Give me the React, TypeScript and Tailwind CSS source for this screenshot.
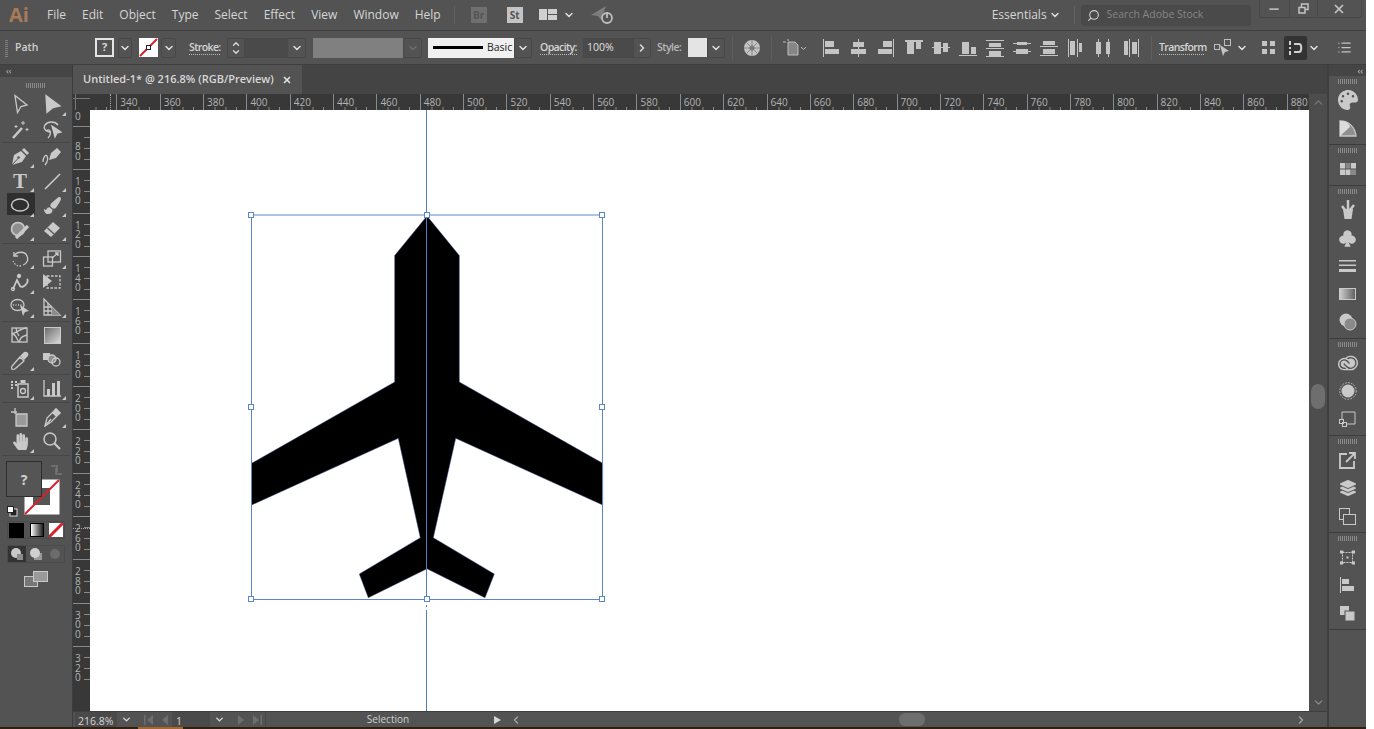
import type { ReactNode } from 'react';
import { ChevronDown, ChevronUp, ChevronLeft, ChevronRight, Search, Minus, X, List } from 'lucide-react';
import { FaPaintBrush, FaHandPaper, FaLayerGroup, FaPalette } from 'react-icons/fa';
import { BsSuitClubFill } from 'react-icons/bs';
import { SiAdobecreativecloud } from 'react-icons/si';

const ui = { fontFamily: '"Open Sans", "Noto Sans", sans-serif' };
const G = '#c9c9c9';

function Ic({ children, size = 20, box = 20 }: { children: ReactNode; size?: number; box?: number }) {
  return (
    <svg width={size} height={size} viewBox={`0 0 ${box} ${box}`} fill="none" stroke={G} strokeWidth={1.3}>
      {children}
    </svg>
  );
}

const tools: { el: ReactNode; flag?: boolean }[][] = [
  [
    { el: <Ic><path d="M5 1.500 17 11l-6 1.500-3.500 6z" /></Ic> },
    { el: <Ic><path d="M4 1.500 18 12l-7 1.500-6 5z" fill={G} /></Ic>, flag: true },
    { el: <Ic><path d="M3 19 12 9" strokeWidth={2.6} /><path d="M13 2v4M11 4h4M6 6v3M4.500 7.500h3M17 9v3M15.500 10.500h3" strokeWidth={1} /></Ic> },
    { el: <Ic><path d="M9 13C3 13 1 9 3 6c3-4 10-4 13 0" /><path d="M6 19c2-2 3-4 2-7-1-2-3-1-3 0" /><path d="M10 7l9 6-4 1-2 4z" fill={G} /></Ic> },
  ],
  [
    { el: <Ic><path d="M2 19 4 9l7-4 5 5-4 6z" fill={G} stroke="none" /><path d="M2 19 8 12.500" stroke="#535353" strokeWidth={1} /><circle cx="8.500" cy="11.500" r="1.300" fill="#535353" stroke="none" /><path d="M12 4l2-2 5 5-2 2z" fill={G} stroke="none" /></Ic>, flag: true },
    { el: <Ic><path d="M1 16c0-5 3-8 4-6 2 4-2 9-2 9" /><path d="M7 14 9 7l6-5 4 4-5 6z" fill={G} stroke="none" /></Ic> },
    { el: <span className="mt-[2px] text-[21px] leading-none font-bold text-[#c9c9c9]" style={{ fontFamily: '"Liberation Serif", serif' }}>T</span>, flag: true },
    { el: <Ic><path d="M3 18 18 3" strokeWidth={1.6} /></Ic>, flag: true },
    { el: <Ic><ellipse cx="10" cy="10" rx="8.500" ry="6" strokeWidth={1.5} /></Ic>, flag: true },
    { el: <FaPaintBrush size={17} color={G} />, flag: true },
    { el: <Ic><circle cx="8" cy="9" r="6.500" fill="#8f8f8f" strokeWidth={1.6} /><path d="M6 18 18 6" strokeWidth={3.2} /></Ic>, flag: true },
    { el: <Ic><path d="M2 11 11 2l7 6-9 9z" fill={G} stroke="none" /><path d="M5.500 8l6.500 6" stroke="#535353" strokeWidth={1.2} /></Ic>, flag: true },
  ],
  [
    { el: <Ic><path d="M4 4v4h4" /><path d="M4 8c3-5 11-5 13 0s-1 8-4 9" /><path d="M11 18H8l-3-2-2-3" strokeDasharray="1.500 1.500" /></Ic>, flag: true },
    { el: <Ic><rect x="1.500" y="9" width="9" height="9" /><rect x="6" y="3" width="12.500" height="11" /><path d="M10 10l6-5M13 5h3v3" /></Ic>, flag: true },
    { el: <Ic><path d="M3 17 7 8l3 6c2 2 5 0 7-3 1-2 1-3 0-4" strokeWidth={1.8} /><circle cx="3" cy="17" r="1.500" /><circle cx="9" cy="4" r="1.500" fill={G} /></Ic>, flag: true },
    { el: <Ic><rect x="5" y="4" width="13" height="12" strokeDasharray="2.500 1.500" /><path d="M1 2l9 7-9 7z" fill={G} stroke="none" /></Ic> },
    { el: <Ic><ellipse cx="7.500" cy="8" rx="6.500" ry="5.500" /><path d="M3 8h9" strokeDasharray="1 1.500" /><path d="M10 8l9 6-4 1-2 4z" fill={G} stroke="none" /></Ic>, flag: true },
    { el: <Ic><path d="M2 2v16h16L2 2z" /><path d="M2 10h8M2 14h12M6 6v12M10 10v8" /><path d="M10 10l8 8h-8z" fill="#8c8c8c" stroke="none" /></Ic>, flag: true },
  ],
  [
    { el: <Ic><rect x="2" y="3" width="15" height="14" /><path d="M2 9c5 0 5 8 7.500 8M2 9c5-2 10-6 15-6M9.500 17c0-4 3-6 7.500-7M6 3c0 3 1 5 3 8" /></Ic> },
    { el: <svg width="17" height="17" viewBox="0 0 17 17"><defs><linearGradient id="toolgrad" x1="0" x2="1" y1="0" y2="1"><stop offset="0" stopColor="#6a6a6a" /><stop offset="1" stopColor="#dcdcdc" /></linearGradient></defs><rect x="0.500" y="0.500" width="16" height="16" fill="url(#toolgrad)" stroke={G} /></svg> },
    { el: <Ic><path d="M2 19c-1-1 0-3 1-4l7-8 4 4-8 7c-1 1-3 2-4 1z" /><path d="M11 6l3-3c2-2 5 1 3 3l-3 3z" fill={G} /></Ic>, flag: true },
    { el: <Ic><rect x="1" y="3" width="7" height="7" fill={G} stroke="none" /><circle cx="10" cy="9" r="4" fill="#8f8f8f" /><circle cx="14" cy="12" r="4" /></Ic> },
  ],
  [
    { el: <Ic><path d="M1 4h2M5 4h2M1 7h2M5 7h2M1 10h2" strokeWidth={1.8} /><rect x="8" y="6" width="10" height="13" strokeWidth={1.5} /><circle cx="13" cy="13" r="2.500" /><rect x="10.500" y="2" width="5" height="3" fill={G} stroke="none" /></Ic>, flag: true },
    { el: <Ic><path d="M2 2v16h17" /><rect x="5" y="11" width="3" height="7" fill={G} stroke="none" /><rect x="10" y="5" width="3" height="13" fill={G} stroke="none" /><rect x="15" y="3" width="3" height="15" fill={G} stroke="none" /></Ic>, flag: true },
  ],
  [
    { el: <Ic><path d="M1 5h6M5 1v6" /><path d="M6 7h11v12H6z" fill="#9a9a9a" /></Ic> },
    { el: <Ic><path d="M3 19l2-8 9-9 4 4-9 9z" /><path d="M3 19l6-7" /><path d="M14 2l4 4-4 3-3-3z" fill={G} /></Ic>, flag: true },
    { el: <FaHandPaper size={17} color={G} />, flag: true },
    { el: <Ic><circle cx="8" cy="8" r="6" strokeWidth={1.5} /><path d="M12.500 12.500 18 18" strokeWidth={2.200} /></Ic> },
  ],
];

function ToolGrid({ items, tight = false }: { items: { el: ReactNode; flag?: boolean }[]; tight?: boolean }) {
  return (
    <div className={`mx-[2px] grid grid-cols-2 justify-items-center border-b border-[#474747] px-[2px] ${tight ? 'py-[1px]' : 'py-[1.500px]'}`}>
      {items.map((t, i) => (
        <div key={i} className="relative flex h-[24.500px] w-[30px] items-center justify-center">
          {t.el}
          {t.flag && <span className="absolute bottom-[1px] right-[1px] h-0 w-0 border-b-[4px] border-l-[4px] border-b-[#c9c9c9] border-l-transparent" />}
        </div>
      ))}
    </div>
  );
}

function Grip() {
  return <div className="mx-auto h-[5px] w-[20px] bg-[repeating-linear-gradient(90deg,#8a8a8a_0,#8a8a8a_1px,transparent_1px,transparent_2px)]" />;
}

function LeftPanel() {
  return (
    <div className="flex w-[73px] shrink-0 flex-col border-r border-[#3c3c3c] bg-[#535353]">
      <div className="h-[12px] bg-[#454545] pl-[6px] text-[9px] leading-[11px] text-[#bdbdbd]">‹‹</div>
      <div className="flex h-[11px] items-end"><Grip /></div>
      <div className="pt-[3px]">
        <ToolGrid items={tools[0]} tight />
        <div className="relative">
          <span className="absolute left-[7px] top-[50px] h-[22px] w-[28px] bg-[#2f2f2f]" />
          <div className="relative"><ToolGrid items={tools[1]} tight /></div>
        </div>
        <ToolGrid items={tools[2]} />
        <ToolGrid items={tools[3]} />
        <ToolGrid items={tools[4]} />
        <ToolGrid items={tools[5]} />
      </div>
      {/* fill and stroke */}
      <div className="relative mt-[4px] h-[58px] shrink-0">
        <svg width="73" height="60" viewBox="0 0 73 60" className="absolute left-0 top-0">
          <path d="M51 6h6v6M62 14h-6V8" stroke="#777" strokeWidth="1.500" fill="none" />
          <rect x="24.500" y="19.500" width="35" height="35" fill="#fff" />
          <rect x="33" y="28" width="17" height="17" fill="#555" />
          <path d="M25 54 59 20" stroke="#d8202a" strokeWidth="2" />
          <rect x="6.500" y="1.500" width="35" height="35" fill="#555" stroke="#2e2e2e" />
          <rect x="10" y="49" width="7" height="7" fill="#222" stroke="#ddd" />
          <rect x="7.500" y="46.500" width="6" height="6" fill="#fff" stroke="#222" />
        </svg>
        <span className="absolute left-[6px] top-[2px] flex h-[35px] w-[36px] items-center justify-center text-[14px] font-bold text-[#d2d2d2]">?</span>
      </div>
      <div className="mt-[3px] ml-[7px] flex h-[18px] w-[58px] items-center justify-between border border-[#4a4a4a] px-[1px]">
        <span className="h-[15px] w-[15px] bg-black" />
        <span className="h-[14px] w-[14px] border border-black bg-gradient-to-r from-white to-[#222]" />
        <svg width="14" height="14" viewBox="0 0 14 14"><rect width="14" height="14" fill="#fff" /><path d="M0 14 14 0" stroke="#d8202a" strokeWidth="3" /></svg>
      </div>
      <div className="mt-[6px] ml-[7px] flex h-[18px] w-[58px] items-center border border-[#4a4a4a]">
        <span className="flex h-full w-[18px] items-center justify-center bg-[#333]"><svg width="14" height="14" viewBox="0 0 14 14"><circle cx="6" cy="6" r="5" fill="#c9c9c9" /><rect x="7" y="7" width="6" height="6" fill="#8c8c8c" /></svg></span>
        <span className="flex h-full w-[19px] items-center justify-center"><svg width="14" height="14" viewBox="0 0 14 14"><rect x="5" y="6" width="8" height="7" fill="#9a9a9a" /><circle cx="6" cy="6" r="5" fill="#d0d0d0" /></svg></span>
        <span className="flex h-full w-[19px] items-center justify-center"><svg width="12" height="12" viewBox="0 0 12 12"><circle cx="6" cy="6" r="5" fill="#6c6c6c" /></svg></span>
      </div>
      <div className="mt-[8px] flex justify-center">
        <svg width="24" height="16" viewBox="0 0 24 16"><rect x="0.500" y="5.500" width="13" height="10" fill="#777" stroke="#c9c9c9" /><rect x="9.500" y="0.500" width="14" height="10" fill="#9a9a9a" stroke="#c9c9c9" /></svg>
      </div>
    </div>
  );
}

const SEL = 'flex h-[20px] items-center justify-center rounded-[2px] border border-[#484848] bg-[#535353]';

function Chev({ w = 18, dim = false }: { w?: number; dim?: boolean }) {
  return (
    <span className={SEL} style={{ width: w }}>
      <ChevronDown size={12} strokeWidth={3} color={dim ? '#6e6e6e' : '#dedede'} />
    </span>
  );
}

function Lbl({ children, className = '' }: { children: ReactNode; className?: string }) {
  return <span className={`border-b border-dotted border-[#bbb] text-[10.500px] leading-[13px] font-semibold tracking-[-0.600px] text-[#d5d5d5] ${className}`}>{children}</span>;
}

const aligns: { bars: number[][] }[] = [
  { bars: [[0, 0, 1, 18], [2, 2, 9, 6], [2, 10, 14, 5]] },
  { bars: [[8, 0, 1, 18], [3, 3, 11, 5], [1, 10, 15, 5]] },
  { bars: [[16, 0, 1, 18], [6, 2, 9, 6], [1, 10, 14, 5]] },
  { bars: [[0, 1, 18, 2], [2, 3, 7, 12], [11, 3, 5, 7]] },
  { bars: [[0, 8, 18, 1], [2, 3, 7, 12], [11, 4, 5, 9]] },
  { bars: [[0, 16, 18, 1], [3, 3, 7, 12], [12, 8, 5, 7]] },
  { bars: [[0, 1, 18, 1], [3, 4, 12, 4], [0, 9, 18, 1], [3, 12, 12, 5], [0, 17, 18, 1]] },
  { bars: [[4, 3, 10, 3], [0, 4, 18, 1], [3, 10, 12, 5], [0, 12, 18, 1]] },
  { bars: [[3, 2, 12, 4], [0, 7, 18, 1], [3, 10, 12, 5], [0, 16, 18, 1]] },
  { bars: [[0, 0, 1, 18], [2, 2, 5, 14], [9, 0, 1, 18], [11, 4, 3, 9]] },
  { bars: [[1, 3, 5, 12], [3, 0, 1, 18], [11, 3, 4, 12], [13, 0, 1, 18]] },
  { bars: [[2, 2, 4, 14], [7, 0, 1, 18], [10, 3, 5, 12], [16, 0, 1, 18]] },
];

function AlignIcon({ bars }: { bars: number[][] }) {
  return (
    <svg width="18" height="18" viewBox="0 0 18 18" fill="#c4c4c4" className="shrink-0">
      {bars.map((b, i) => <rect key={i} x={b[0]} y={b[1]} width={b[2]} height={b[3]} />)}
    </svg>
  );
}

function MenuBar() {
  return (
    <div className="flex h-[31px] shrink-0 items-center border-b border-[#3e3e3e] [&>*]:shrink-0" style={ui}>
      <span className="ml-[9px] w-[38px] text-[20px] font-bold leading-none text-[#a87a58]">Ai</span>
      <div className="flex gap-[16px] text-[12px] text-[#d6d6d6]">
        {['File', 'Edit', 'Object', 'Type', 'Select', 'Effect', 'View', 'Window', 'Help'].map((m) => <span key={m}>{m}</span>)}
      </div>
      <span className="ml-[13px] h-[18px] w-px bg-[#616161]" />
      <span className="ml-[16px] flex h-[16px] w-[16px] items-center justify-center bg-[#6f6f6f] text-[10px] font-bold text-[#555]">Br</span>
      <span className="ml-[20px] flex h-[16px] w-[16px] items-center justify-center bg-[#c4c4c4] text-[10px] font-bold text-[#555]">St</span>
      <svg width="18" height="12" viewBox="0 0 18 12" className="ml-[16px]" fill="#d0d0d0"><rect width="8" height="11" /><rect x="9" width="9" height="5" /><rect x="9" y="6" width="9" height="5" /></svg>
      <ChevronDown size={12} strokeWidth={3} color="#dedede" className="ml-[6px]" />
      <svg width="24" height="20" viewBox="0 0 24 20" className="ml-[15px]">
        <path d="M1 10 16 1l-5 14-3-4z" fill="#7d7d7d" />
        <circle cx="17" cy="13" r="5" fill="none" stroke="#bdbdbd" strokeWidth="1.800" />
        <path d="M17 7v6" stroke="#bdbdbd" strokeWidth="1.800" />
      </svg>
      <span className="ml-[378px] text-[12px] text-[#d6d6d6]">Essentials</span>
      <ChevronDown size={12} strokeWidth={3} color="#dedede" className="ml-[2px]" />
      <span className="ml-[13px] h-[18px] w-px bg-[#616161]" />
      <div className="ml-[6px] flex h-[21px] w-[170px] items-center rounded-[3px] border border-[#484848] bg-[#4a4a4a] pl-[5px] text-[10.500px] text-[#868686]">
        <Search size={13} color="#cfcfcf" className="-scale-x-100" />
        <span className="ml-[7px]">Search Adobe Stock</span>
      </div>
      <div className="mb-[12px] ml-[8px] flex h-[18px] w-[103px] items-center rounded-b-[3px] border border-t-0 border-[#484848]">
        <span className="flex h-full w-[30px] items-center justify-center border-r border-[#484848]"><Minus size={14} strokeWidth={3} color="#b4b4b4" /></span>
        <span className="flex h-full w-[28px] items-center justify-center border-r border-[#484848]">
          <svg width="11" height="11" viewBox="0 0 11 11" fill="none" stroke="#c4c4c4" strokeWidth="1.500"><rect x="3.500" y="1" width="6.500" height="5.500" /><rect x="1" y="4.500" width="6" height="5.500" fill="#535353" /></svg>
        </span>
        <span className="flex flex-1 items-center justify-center"><X size={14} strokeWidth={3} color="#c4c4c4" /></span>
      </div>
    </div>
  );
}

function ControlBar() {
  return (
    <div className="flex h-[34px] shrink-0 items-center border-b border-[#3e3e3e] [&>*]:shrink-0" style={ui}>
      <span className="ml-[5px] h-[18px] w-[3px] bg-[repeating-linear-gradient(0deg,#808080_0,#808080_1px,transparent_1px,transparent_2px)]" />
      <span className="ml-[7px] w-[80px] text-[10.500px] font-semibold text-[#cfcfcf]">Path</span>
      <span className="flex h-[19px] w-[19px] items-center justify-center border-2 border-[#e4e4e4] bg-[#535353] text-[11px] font-bold text-[#d8d8d8]">?</span>
      <span className="ml-[4px]"><Chev w={14} /></span>
      <svg width="19" height="19" viewBox="0 0 19 19" className="ml-[7px]">
        <rect width="19" height="19" fill="#fff" />
        <path d="M1 18 18 1" stroke="#d8202a" strokeWidth="2" />
        <rect x="7.500" y="7.500" width="4" height="4" fill="#fff" stroke="#222" />
      </svg>
      <span className="ml-[3px]"><Chev w={15} /></span>
      <Lbl className="ml-[13px] w-[31px]">Stroke:</Lbl>
      <div className="ml-[7px] flex h-[20px] w-[79px] items-center rounded-[2px] border border-[#484848]">
        <span className="flex h-full w-[17px] flex-col items-center justify-center border-r border-[#484848]">
          <ChevronUp size={10} strokeWidth={3} color="#dedede" className="-mb-[2px]" />
          <ChevronDown size={10} strokeWidth={3} color="#dedede" />
        </span>
        <span className="h-full flex-1 bg-[#4a4a4a]" />
        <span className="flex h-full w-[17px] items-center justify-center"><ChevronDown size={12} strokeWidth={3} color="#dedede" /></span>
      </div>
      <span className="ml-[7px] h-[20px] w-[90px] bg-[#808080]" />
      <Chev w={19} dim />
      <div className="ml-[6px] flex h-[20px] w-[86px] items-center bg-[#f0f0f0] pl-[5px]">
        <span className="h-[3px] w-[50px] bg-black" />
        <span className="ml-[4px] text-[10.500px] text-[#222]">Basic</span>
      </div>
      <Chev w={18} />
      <Lbl className="ml-[8px] w-[37px]">Opacity:</Lbl>
      <div className="ml-[6px] flex h-[20px] w-[68px] items-center rounded-[2px] border border-[#484848] bg-[#4a4a4a] text-[10.500px] text-[#e0e0e0]">
        <span className="w-[50px] pl-[3px]">100%</span>
        <span className="flex h-full flex-1 items-center justify-center bg-[#535353]"><ChevronRight size={12} strokeWidth={3} color="#dedede" /></span>
      </div>
      <span className="ml-[6px] w-[25px] text-[10.500px] font-semibold tracking-[-0.500px] text-[#b9b9b9]">Style:</span>
      <span className="ml-[6px] h-[19px] w-[19px] bg-[#e4e4e4]" />
      <Chev w={18} />
      <span className="ml-[7px] h-[24px] w-px bg-[#5f5f5f]" />
      <svg width="16" height="16" viewBox="0 0 16 16" className="ml-[11px]">
        <circle cx="8" cy="8" r="8" fill="#c4c4c4" />
        <circle cx="8" cy="8" r="2.500" fill="#777" />
        <path d="M8 0v16M0 8h16M2.500 2.500l11 11M13.500 2.500l-11 11" stroke="#777" strokeWidth="0.800" />
      </svg>
      <span className="ml-[11px] h-[24px] w-px bg-[#5f5f5f]" />
      <svg width="24" height="18" viewBox="0 0 24 18" className="ml-[11px]" fill="none" stroke="#bdbdbd">
        <path d="M0 3h3M5 0v2" />
        <path d="M5 3h7l3 3v10H5z" fill="#868686" />
        <path d="M18 8l2.500 2.500L23 8" />
      </svg>
      <div className="ml-[16px] flex w-[317px] items-center justify-between">
        {aligns.map((a, i) => <AlignIcon key={i} bars={a.bars} />)}
      </div>
      <span className="ml-[11px] h-[24px] w-px bg-[#5f5f5f]" />
      <Lbl className="ml-[7px] w-[45px]">Transform</Lbl>
      <svg width="18" height="18" viewBox="0 0 18 18" className="ml-[10px]" fill="none" stroke="#bdbdbd">
        <rect x="0.500" y="5.500" width="5" height="5" />
        <rect x="10.500" y="0.500" width="6" height="6" />
        <path d="M6 6l9 6-4 1-2 4z" fill="#c4c4c4" stroke="none" />
      </svg>
      <ChevronDown size={12} strokeWidth={3} color="#dedede" className="ml-[4px]" />
      <svg width="13" height="13" viewBox="0 0 13 13" fill="#c4c4c4" className="ml-[14px]"><rect width="5" height="5" /><rect x="8" width="5" height="5" /><rect y="8" width="5" height="5" /><rect x="8" y="8" width="5" height="5" /></svg>
      <span className="ml-[9px] flex h-[24px] w-[23px] items-center justify-center rounded-[2px] bg-[#333]">
        <svg width="15" height="14" viewBox="0 0 15 14" fill="none" stroke="#d0d0d0" strokeWidth="2"><path d="M2 0v4M2 6v2M2 10v4" /><path d="M6 3h5c3 0 3 8 0 8H6" /></svg>
      </span>
      <ChevronDown size={12} strokeWidth={3} color="#dedede" className="ml-[1px]" />
      <List size={15} color="#c4c4c4" className="ml-[17px]" />
    </div>
  );
}

const topLabels = Array.from({ length: 29 }, (_, i) => 320 + i * 20);
const sideLabels = ['80', '100', '120', '140', '160', '180', '200', '220', '240', '260', '280', '300', '320'];

function TopRuler() {
  return (
    <div className="relative flex h-[16px] shrink-0 bg-[#383838]" style={ui}>
      <div className="w-[17px] shrink-0">
        <svg width="17" height="16" viewBox="0 0 17 16"><path d="M2.500 0v16M0 4.500h17" stroke="#777" fill="none" /></svg>
      </div>
      <div className="flex min-w-0 flex-1 overflow-hidden">
        <div className="-ml-[17px] flex shrink-0">
          {topLabels.map((n) => (
            <div key={n} className="relative h-[16px] w-[43.350px] shrink-0 border-l border-[#8a8a8a] pl-[3px] text-[10px] leading-[16px] text-[#b4b4b4]">
              {n > 320 && n}
              <svg width="43" height="16" viewBox="0 0 43 16" className="absolute left-0 top-0">
                <path d="M22 13v3M32.500 13v3M11 13v3" stroke="#8a8a8a" />
              </svg>
            </div>
          ))}
        </div>
      </div>
      <div className="flex w-[18px] shrink-0 items-center justify-center bg-[#4d4d4d]"><ChevronUp size={13} strokeWidth={2.500} color="#777" /></div>
      {/* pointer position mark */}
      <span className="absolute left-[37px] top-0 h-full border-l border-dotted border-[#aaa]" />
    </div>
  );
}

function SideRuler() {
  return (
    <div className="relative flex w-[17px] shrink-0 flex-col overflow-hidden bg-[#383838] text-[10px] leading-[9.500px] text-[#b4b4b4]" style={ui}>
      <div className="h-[16px] shrink-0 pl-[2px] pt-[2px]">0</div>
      {sideLabels.map((n) => (
        <div key={n} className={`relative h-[43.350px] shrink-0 border-t border-[#8a8a8a] pl-[2px] ${n.length === 2 ? 'pt-[15px]' : 'pt-[7px]'}`}>
          {n.split('').map((c, i) => <div key={i}>{c}</div>)}
          <svg width="17" height="43" viewBox="0 0 17 43" className="absolute left-0 top-0">
            <path d="M11 10.500h6M11 21.500h6M11 32.500h6" stroke="#8a8a8a" />
          </svg>
        </div>
      ))}
      <span className="absolute left-0 top-[418px] w-full border-t border-dotted border-[#aaa]" />
    </div>
  );
}

function Artboard() {
  const handles = [[251, 215], [427, 215], [602, 215], [251, 407], [602, 407], [251, 599], [427, 599], [602, 599]];
  return (
    <div className="relative min-w-0 flex-1 bg-white">
      <svg viewBox="90 110 1219 601" className="absolute inset-0 h-full w-full">
        <path
          fill="#000"
          stroke="#3a4a80"
          strokeWidth="0.500"
          d="M427 216 394.700 255.500V382L251.700 463.300V505L398.300 438.300 420.300 537.700 359.300 574 368.300 597.700 427 568.700 485 597.700 494.300 574 433.300 537.700 455.700 438.300 602.700 505V463.300L459.300 382V255.500Z"
        />
        <path d="M251.500 215H602.500V599.500H251.500Z" fill="none" stroke="#5b87c5" />
        <path d="M426.500 110V600M426.500 612V711" stroke="#4f7fbd" />
        <path d="M426.500 600V612" stroke="#4f7fbd" strokeDasharray="2 3" />
        {handles.map(([x, y]) => <rect key={`${x}-${y}`} x={x - 2.500} y={y - 2.500} width="5" height="5" fill="#fff" stroke="#5b87c5" />)}
      </svg>
    </div>
  );
}

function Scrollbar() {
  return (
    <div className="flex w-[18px] shrink-0 flex-col items-center bg-[#4d4d4d] pb-[2px]">
      <div className="mt-[274px] h-[25px] w-[14px] rounded-[7px] bg-[#6e6e6e]" />
      <ChevronDown size={13} strokeWidth={2.500} color="#8a8a8a" className="mt-auto" />
    </div>
  );
}

function NavBack() {
  return (
    <svg width="28" height="10" viewBox="0 0 28 10" fill="#6e6e6e"><rect x="0" y="0" width="1.500" height="10" /><path d="M9 0v10L3 5zM24 0v10l-6-5z" /></svg>
  );
}

function NavFwd() {
  return (
    <svg width="28" height="10" viewBox="0 0 28 10" fill="#6e6e6e"><path d="M3 0v10l6-5zM18 0v10l6-5z" /><rect x="25.500" y="0" width="1.500" height="10" /></svg>
  );
}

function StatusBar() {
  return (
    <div className="flex h-[16px] shrink-0 items-center border-t border-[#3e3e3e] bg-[#535353] text-[10.500px] leading-[19px] text-[#d6d6d6] [&>*]:shrink-0" style={ui}>
      <span className="ml-[2px] h-full w-[42px] bg-[#4a4a4a] pl-[3px]">216.8%</span>
      <span className="flex h-full w-[18px] items-center justify-center"><ChevronDown size={11} strokeWidth={3} color="#dedede" /></span>
      <span className="ml-[9px] flex w-[28px] items-center"><NavBack /></span>
      <span className="h-full w-[38px] bg-[#4a4a4a] pl-[4px]">1</span>
      <span className="flex h-full w-[18px] items-center justify-center"><ChevronDown size={11} strokeWidth={3} color="#dedede" /></span>
      <span className="ml-[7px] flex w-[30px] items-center"><NavFwd /></span>
      <span className="h-full w-px bg-[#484848]" />
      <span className="w-[228px] pl-[16px] text-center text-[10px] text-[#cfcfcf]">Selection</span>
      <span className="h-0 w-0 border-y-[4px] border-l-[7px] border-y-transparent border-l-[#d6d6d6]" />
      <ChevronLeft size={12} strokeWidth={2.500} color="#a8a8a8" className="ml-[9px]" />
      <span className="ml-[377px] h-[13px] w-[26px] rounded-[6px] bg-[#6e6e6e]" />
      <ChevronRight size={12} strokeWidth={2.500} color="#a8a8a8" className="ml-auto mr-[20px]" />
    </div>
  );
}

function RightGroup({ items }: { items: ReactNode[] }) {
  return (
    <div className="flex flex-col items-center border-b border-[#3c3c3c] pb-[2px]">
      <div className="flex h-[10px] w-full items-center pt-[1px]"><Grip /></div>
      {items.map((it, i) => (
        <div key={i} className="flex h-[28px] w-full items-center justify-center">{it}</div>
      ))}
    </div>
  );
}

function RightPanel() {
  return (
    <div className="flex w-[39px] shrink-0 flex-col border-l-2 border-[#3f3f3f] bg-[#535353]">
      <div className="flex h-[11px] shrink-0 items-center justify-end bg-[#454545] pr-[3px] text-[9px] leading-none text-[#c8c8c8]">‹‹</div>
      <RightGroup items={[
        <FaPalette size={20} color={G} />,
        <Ic><path d="M2 18V3c9 0 15 6 16 15z" fill="#8f8f8f" stroke={G} /><path d="M2 18 2 3c5 0 9 2 10 6z" fill="#dcdcdc" stroke="none" /></Ic>,
      ]} />
      <RightGroup items={[
        <svg width="16" height="12" viewBox="0 0 16 12" fill="#c9c9c9"><rect width="5" height="5.500" /><rect x="5.500" width="5" height="5.500" fill="#888" /><rect x="11" width="5" height="5.500" /><rect y="6.500" width="5" height="5.500" /><rect x="5.500" y="6.500" width="5" height="5.500" /><rect x="11" y="6.500" width="5" height="5.500" fill="#888" /></svg>,
      ]} />
      <RightGroup items={[
        <svg width="16" height="20" viewBox="0 0 16 20" fill="#c9c9c9"><path d="M3 9h10l-1.500 10h-7z" /><path d="M2 6l3 4M8 0v10M14 5l-4 5" stroke="#c9c9c9" strokeWidth="2.500" /></svg>,
        <BsSuitClubFill size={19} color={G} />,
        <svg width="17" height="12" viewBox="0 0 17 12" fill="#c9c9c9"><rect width="17" height="1.500" /><rect y="4.500" width="17" height="1.500" /><rect y="9" width="17" height="3" /></svg>,
        <svg width="17" height="12" viewBox="0 0 17 12"><defs><linearGradient id="rpgrad" x1="0" x2="1"><stop offset="0" stopColor="#cfcfcf" /><stop offset="1" stopColor="#5f5f5f" /></linearGradient></defs><rect x="0.500" y="0.500" width="16" height="11" fill="url(#rpgrad)" stroke="#c9c9c9" /></svg>,
        <svg width="18" height="18" viewBox="0 0 18 18"><circle cx="7" cy="7" r="6.500" fill="#c9c9c9" /><circle cx="11" cy="11" r="6" fill="#8a8a8a" stroke="#c9c9c9" /></svg>,
      ]} />
      <RightGroup items={[
        <SiAdobecreativecloud size={20} color={G} />,
        <svg width="18" height="18" viewBox="0 0 18 18"><circle cx="9" cy="9" r="6.500" fill="#c9c9c9" /><circle cx="9" cy="9" r="8.300" fill="none" stroke="#c9c9c9" strokeDasharray="1.500 1.500" /></svg>,
        <svg width="17" height="17" viewBox="0 0 17 17" fill="none" stroke="#c9c9c9"><path d="M3 1h13v12H7" /><path d="M3 1v7" /><rect x="0.500" y="8.500" width="4" height="4" /><rect x="3.500" y="11.500" width="4" height="4" /></svg>,
      ]} />
      <RightGroup items={[
        <svg width="17" height="17" viewBox="0 0 17 17" fill="none" stroke="#c9c9c9" strokeWidth="1.800"><path d="M8 2H1v14h14V9" /><path d="M7 10l8-8M10 1h6v6" /></svg>,
        <FaLayerGroup size={16} color={G} />,
        <svg width="17" height="17" viewBox="0 0 17 17" fill="none" stroke="#c9c9c9"><rect x="0.500" y="0.500" width="10" height="11" /><rect x="4.500" y="6.500" width="12" height="10" fill="#535353" /></svg>,
      ]} />
      <RightGroup items={[
        <svg width="15" height="15" viewBox="0 0 15 15" fill="none" stroke="#c9c9c9"><rect x="2.500" y="2.500" width="10" height="10" strokeDasharray="2 1" /><path d="M0 1h3v2H0zM12 1h3v2h-3zM0 12h3v2H0zM12 12h3v2h-3z" fill="#c9c9c9" /><rect x="7" y="7" width="1" height="1" fill="#c9c9c9" /></svg>,
        <svg width="15" height="16" viewBox="0 0 15 16" fill="#c9c9c9"><rect width="1" height="16" /><rect x="2" y="2" width="7" height="5" /><rect x="2" y="9" width="12" height="5" /></svg>,
        <svg width="15" height="15" viewBox="0 0 15 15"><rect width="9" height="9" fill="#c9c9c9" /><rect x="5" y="5" width="10" height="10" fill="#c9c9c9" stroke="#535353" /></svg>,
      ]} />
    </div>
  );
}

export default function App() {
  return (
    <div className="flex h-[729px] w-[1366px] flex-col overflow-hidden bg-[#535353]">
      <MenuBar />
      <ControlBar />
      <div className="flex min-h-0 flex-1">
        <LeftPanel />
        <div className="flex min-w-0 flex-1 flex-col">
          <div className="flex h-[29px] shrink-0 bg-[#444444]" style={ui}>
            <div className="flex w-[229px] items-center justify-between bg-[#535353] pl-[10px] pr-[10px] text-[11px] font-semibold text-[#d8d8d8]">
              <span>Untitled-1* @ 216.8% (RGB/Preview)</span>
              <X size={10} strokeWidth={4} color="#e4e4e4" />
            </div>
          </div>
          <TopRuler />
          <div className="flex min-h-0 flex-1">
            <SideRuler />
            <Artboard />
            <Scrollbar />
          </div>
          <StatusBar />
        </div>
        <RightPanel />
      </div>
      <div className="relative h-[2px] shrink-0 bg-[#2f2110]">
        <span className="absolute left-[138px] top-0 h-[2px] w-[45px] bg-[#a8672a]" />
      </div>
    </div>
  );
}
